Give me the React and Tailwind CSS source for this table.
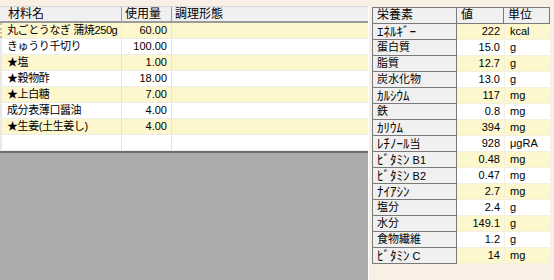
import React from 'react';

const ingredients = [
  { name: '丸ごとうなぎ 蒲焼250g', qty: '60.00' },
  { name: 'きゅうり千切り', qty: '100.00' },
  { name: '★塩', qty: '1.00' },
  { name: '★穀物酢', qty: '18.00' },
  { name: '★上白糖', qty: '7.00' },
  { name: '成分表薄口醤油', qty: '4.00' },
  { name: '★生姜(土生姜し)', qty: '4.00' },
  { name: '', qty: '' },
];

const nutrients = [
  ['ｴﾈﾙｷﾞｰ', '222', 'kcal'],
  ['蛋白質', '15.0', 'g'],
  ['脂質', '12.7', 'g'],
  ['炭水化物', '13.0', 'g'],
  ['ｶﾙｼｳﾑ', '117', 'mg'],
  ['鉄', '0.8', 'mg'],
  ['ｶﾘｳﾑ', '394', 'mg'],
  ['ﾚﾁﾉｰﾙ当', '928', 'μgRA'],
  ['ﾋﾞﾀﾐﾝ B1', '0.48', 'mg'],
  ['ﾋﾞﾀﾐﾝ B2', '0.47', 'mg'],
  ['ﾅｲｱｼﾝ', '2.7', 'mg'],
  ['塩分', '2.4', 'g'],
  ['水分', '149.1', 'g'],
  ['食物繊維', '1.2', 'g'],
  ['ﾋﾞﾀﾐﾝ C', '14', 'mg'],
];

// latin digits from Liberation Sans, kana/kanji from Noto CJK
const font = { fontFamily: '"Liberation Sans", "Noto Sans CJK JP", sans-serif' };

// half-width katakana comes out tiny in Noto, so those runs get a larger size
function Label({ text }) {
  const parts = text.split(/([\uFF61-\uFF9F]+)/).filter(Boolean);
  return parts.map((p, i) =>
    /[\uFF61-\uFF9F]/.test(p) ? (
      <span key={i} className="text-[13px]">
        {p}
      </span>
    ) : (
      <span key={i}>{p}</span>
    )
  );
}

function RecipeGrid() {
  return (
    <div className="w-[369px] flex flex-col border-r border-white">
      {/* column headers */}
      <div className="flex h-[17px] bg-[#f0f0f0] border-t border-[#d8d8d8] border-b-2 border-b-[#9a9a9a] text-[12px] leading-[15px]">
        <div className="w-[122px] pl-[6px] border-l-2 border-l-[#f0f0f0] border-r border-[#9a9a9a]">材料名</div>
        <div className="w-[50px] pl-[3px] border-r border-[#9a9a9a]">使用量</div>
        <div className="flex-1 pl-[3px]">調理形態</div>
      </div>
      {ingredients.map((row, i) => (
        <div
          key={i}
          className={`flex h-[16px] border-b border-[#ececec] text-[11px] leading-[15px] ${
            i % 2 === 0 && row.name ? 'bg-[#fdf7cd]' : 'bg-white'
          }`}
        >
          <div
            className={`w-[122px] pl-[5px] tracking-[-0.4px] border-r border-[#e4e4e4] whitespace-nowrap overflow-hidden ${
              i === 0 ? 'border-l-2 border-l-[#c8c0a0] border-dotted' : 'border-l-2 border-l-[#e8e8e8]'
            }`}
          >
            {row.name}
          </div>
          <div className="w-[50px] pr-[4px] text-right border-r border-[#e4e4e4]">{row.qty}</div>
          <div className="flex-1" />
        </div>
      ))}
      <div className="flex-1 bg-[#ababab] border-t-2 border-[#6e6e6e]" />
    </div>
  );
}

function NutrientGrid() {
  return (
    <div className="ml-[3px] mt-[1px] w-[178px] self-start border-l border-t border-[#7a7a7a] text-[11px] leading-[15px]">
      <div className="flex h-[16px] bg-[#f0f0f0] text-[12px] leading-[14px]">
        <div className="w-[84px] pl-[4px] border-r border-b border-[#7a7a7a]">栄養素</div>
        <div className="w-[47px] pl-[4px] border-r border-b border-[#7a7a7a]">値</div>
        <div className="flex-1 pl-[4px] border-r border-b border-[#7a7a7a]">単位</div>
      </div>
      {nutrients.map(([label, value, unit], i) => (
        <div key={label} className="flex h-[16px]">
          <div className="w-[84px] pl-[4px] bg-[#f0f0f0] border-r border-b border-[#7a7a7a] whitespace-nowrap overflow-hidden">
            <Label text={label} />
          </div>
          <div
            className={`w-[47px] pr-[4px] text-right border-b border-[#f4f0e0] ${
              i % 2 === 0 ? 'bg-[#fdf7cd]' : 'bg-white'
            }`}
          >
            {value}
          </div>
          <div
            className={`flex-1 pl-[5px] border-l border-b border-[#f4f0e0] ${
              i % 2 === 0 ? 'bg-[#fdf7cd]' : 'bg-white'
            }`}
          >
            {unit}
          </div>
        </div>
      ))}
    </div>
  );
}

export default function App() {
  return (
    <div className="w-[554px] h-[280px] bg-[#faefe4] flex pt-[6px] overflow-hidden text-black" style={font}>
      <RecipeGrid />
      <NutrientGrid />
    </div>
  );
}
